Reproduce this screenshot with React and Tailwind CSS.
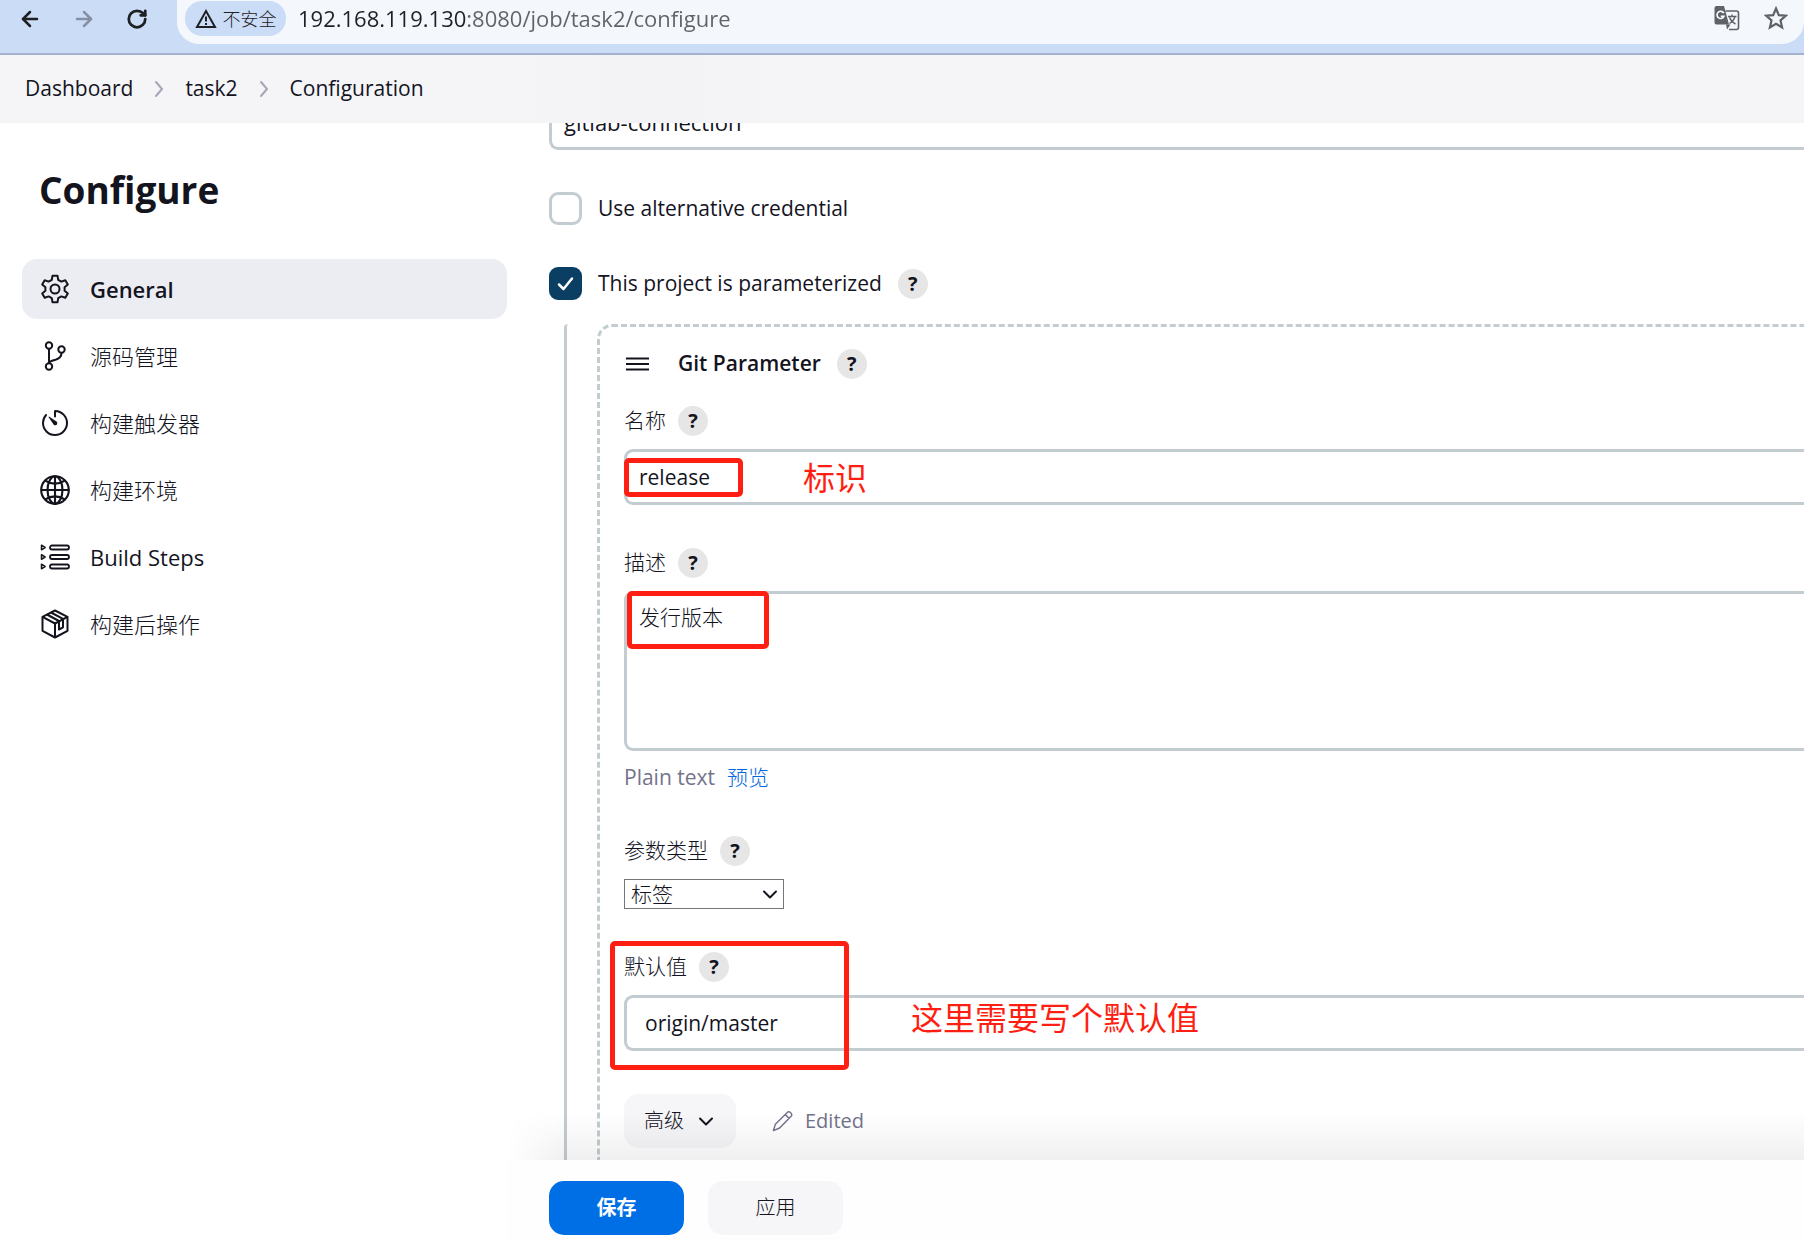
import React from 'react';
import clsx from 'clsx';
import { LuArrowLeft, LuArrowRight, LuRotateCw } from 'react-icons/lu';
import { IoTimerOutline, IoGlobeOutline } from 'react-icons/io5';

function GearIcon({ className }) {
  return (
    <svg viewBox="0 0 30 30" fill="none" stroke="currentColor" strokeWidth="2" strokeLinejoin="round" className={className}>
      <path d="M11.8 5.800L12.500 1.700H17.500L18.200 5.800L21.400 7.600L25.300 6.200L27.800 10.500L24.600 13.200V16.800L27.800 19.500L25.300 23.800L21.400 22.400L18.200 24.200L17.500 28.300H12.500L11.800 24.200L8.600 22.400L4.700 23.800L2.200 19.500L5.400 16.800V13.200L2.200 10.500L4.700 6.200L8.600 7.600z" />
      <circle cx="15" cy="15" r="4.500" />
    </svg>
  );
}

function BranchIcon({ className }) {
  return (
    <svg viewBox="0 0 30 30" fill="none" stroke="currentColor" strokeWidth="2" className={className}>
      <circle cx="9" cy="4.500" r="3.200" />
      <circle cx="21.500" cy="8.500" r="3.200" />
      <circle cx="9" cy="25.500" r="3.200" />
      <path d="M9 7.700v14.600M21.500 11.700c0 4.500-2.500 6-6 7-3.500.8-6 1.600-6.500 3.600" />
    </svg>
  );
}

function StepsIcon({ className }) {
  return (
    <svg viewBox="0 0 30 30" fill="none" stroke="currentColor" strokeWidth="1.800" strokeLinejoin="round" className={className}>
      <rect x="10" y="3.500" width="19" height="4" rx="2" />
      <rect x="10" y="13" width="19" height="4" rx="2" />
      <rect x="10" y="22.500" width="19" height="4" rx="2" />
      <path d="M1.500 3.200v4.600l3.600-2.300zM1.500 12.700v4.600l3.600-2.300zM1.500 22.200v4.600l3.600-2.300z" strokeWidth="1.500" />
    </svg>
  );
}

function PackageIcon({ className }) {
  return (
    <svg viewBox="0 0 30 30" fill="none" stroke="currentColor" strokeWidth="2" strokeLinejoin="round" className={className}>
      <path d="M15 1.500l12.500 6.300v14L15 28.500 2.500 21.800v-14z" />
      <path d="M2.500 7.800L15 14.500l12.500-6.700M15 14.500v14" />
      <path d="M7 5.500l12 6.500v8.500l4-2.200V9.800L11 3.500" />
    </svg>
  );
}

function TranslateIcon({ className }) {
  return (
    <svg viewBox="0 0 26 26" fill="none" className={className}>
      <path d="M11.500 6H22.500a2 2 0 0 1 2 2v14.500a2 2 0 0 1-2 2H15" stroke="#5f6368" strokeWidth="1.600" />
      <path d="M2.500 1h7.500l5 18.500H2.500a2 2 0 0 1-2-2V3a2 2 0 0 1 2-2z" fill="#5f6368" />
      <path d="M12 19.500h4.500L13 24.500z" fill="#5f6368" />
      <path d="M9.800 8.200A3.600 3.600 0 1 0 10 11.200H6.800" stroke="#fff" strokeWidth="1.600" />
      <path d="M14 11.500h8.500M18 9.500v2M21 11.500c-.8 3-3 5.500-5.500 7M15.500 12.500c1 2.500 3 5 6 6.500" stroke="#5f6368" strokeWidth="1.400" />
    </svg>
  );
}

function PencilIcon({ className }) {
  return (
    <svg viewBox="0 0 22 22" fill="none" stroke="currentColor" strokeWidth="1.500" strokeLinejoin="round" className={className}>
      <path d="M1.500 20.500l2-6.500L15.500 2a2.600 2.600 0 0 1 4.300 3.800L8 17.800zM14 3.800l4 4" />
    </svg>
  );
}

function Chevron({ className, d = 'M4 7.500l6 6 6-6' }) {
  return (
    <svg viewBox="0 0 20 20" fill="none" stroke="currentColor" strokeWidth="2" strokeLinecap="round" strokeLinejoin="round" className={className}>
      <path d={d} />
    </svg>
  );
}

const NAV_ITEMS = [
  { label: 'General', icon: GearIcon, size: 'size-[30px]', weight: 'font-semibold', active: true },
  { label: '源码管理', icon: BranchIcon, size: 'size-[30px]', weight: 'font-light' },
  { label: '构建触发器', icon: IoTimerOutline, size: 'size-8', weight: 'font-light' },
  { label: '构建环境', icon: IoGlobeOutline, size: 'size-[34px]', weight: 'font-light' },
  { label: 'Build Steps', icon: StepsIcon, size: 'size-[30px]', weight: 'font-normal' },
  { label: '构建后操作', icon: PackageIcon, size: 'size-[30px]', weight: 'font-light' },
];

const inputClass =
  'block w-full h-14 rounded-l-[9px] border-[3px] border-r-0 border-[#c3ccd1] bg-white outline-none';

function HelpButton() {
  return (
    <button
      type="button"
      aria-label="Help"
      className="flex size-[30px] shrink-0 items-center justify-center rounded-full bg-[#e6e6e6] text-xl leading-none font-bold"
    >
      ?
    </button>
  );
}

function Field({ id, label, help, children }) {
  return (
    <div className="mb-[43px]">
      <div className="mb-[13px] flex h-[30px] items-center gap-3">
        <label htmlFor={id} className="font-light">{label}</label>
        <HelpButton />
      </div>
      <div className="relative">{children}</div>
      {help}
    </div>
  );
}

// Red frames and notes drawn over the form
function Mark({ className }) {
  return <div className={clsx('pointer-events-none absolute rounded-[5px] border-[5px] border-[#ff1f12]', className)} />;
}

function Note({ className, children }) {
  return (
    <span className={clsx('pointer-events-none absolute whitespace-nowrap text-[32px] leading-10 text-[#ff1f12]', className)}>
      {children}
    </span>
  );
}

function BrowserBar() {
  return (
    <div className="flex h-[55px] shrink-0 items-start border-b-2 border-[#a3b3cf] bg-[#cbdcf7]">
      <div className="flex h-[37px] w-[177px] shrink-0 items-center gap-[30px] pl-[18px] text-[#1f2023]">
        <button type="button" aria-label="Back"><LuArrowLeft className="size-6" strokeWidth={2.5} /></button>
        <button type="button" aria-label="Forward" className="text-[#8690a3]"><LuArrowRight className="size-6" strokeWidth={2.5} /></button>
        <button type="button" aria-label="Reload"><LuRotateCw className="size-[22px]" strokeWidth={3} /></button>
      </div>
      <div className="flex h-11 flex-1 items-start rounded-b-[22px] bg-[#f4f7fc] pr-4 pl-2">
        <button type="button" className="mt-px flex h-[35px] w-[101px] items-center justify-center gap-[6px] rounded-[17px] bg-[#cbdcf7] text-lg text-[#1f2023]">
          <svg viewBox="0 0 22 20" fill="none" stroke="currentColor" strokeWidth="2" className="h-5 w-[22px]">
            <path d="M11 2L20 18H2zM11 7.500v5M11 14v2" />
          </svg>
          <span className="font-light">不安全</span>
        </button>
        {/* host part dark, port and path grey */}
        <input
          aria-label="Address"
          readOnly
          value="192.168.119.130:8080/job/task2/configure"
          className="ml-3 h-9 min-w-0 flex-1 bg-[linear-gradient(to_right,#1f2023_168px,#5f6368_168px)] bg-clip-text text-[22px] text-transparent outline-none"
        />
        <div className="flex h-9 items-center gap-6">
          <button type="button" aria-label="Translate"><TranslateIcon className="size-[26px]" /></button>
          <button type="button" aria-label="Bookmark">
            <svg viewBox="0 0 24 24" fill="none" stroke="#5f6368" strokeWidth="2.200" className="size-6">
              <path d="M12 2.500l2.800 6.600 7.100.6-5.400 4.700 1.600 7-6.100-3.700-6.100 3.700 1.600-7-5.400-4.700 7.100-.6z" />
            </svg>
          </button>
        </div>
      </div>
    </div>
  );
}

function Breadcrumbs() {
  return (
    <nav className="flex h-[68px] shrink-0 items-center gap-4 bg-[#f5f5f8] bg-linear-to-r from-transparent from-28% via-black/1 via-36% to-transparent to-44% pl-[25px]">
      <a href="#dashboard">Dashboard</a>
      <Chevron className="size-5 text-[#a6a6b8]" d="M7 3l6 7-6 7" />
      <a href="#task2">task2</a>
      <Chevron className="size-5 text-[#a6a6b8]" d="M7 3l6 7-6 7" />
      <a href="#configure">Configuration</a>
    </nav>
  );
}

function Sidebar() {
  return (
    <aside className="w-[507px] shrink-0 pl-[22px]">
      <h1 className="mt-10 mb-[42px] pl-[17px] text-[37px] leading-[54px] font-bold">Configure</h1>
      <nav className="flex flex-col gap-[7px]">
        {NAV_ITEMS.map(({ label, icon: Icon, size, weight, active }) => (
          <a
            key={label}
            href="#section"
            className={clsx(
              'flex h-[60px] items-center gap-5 rounded-[15px] pl-[18px] text-[22px]',
              weight,
              active && 'bg-[#ecedf3]'
            )}
          >
            <span className="flex size-[30px] items-center justify-center">
              <Icon className={clsx('shrink-0', size)} />
            </span>
            {label}
          </a>
        ))}
      </nav>
    </aside>
  );
}

function Checkbox({ id, checked, label, children }) {
  return (
    <div className="flex h-[33px] items-center">
      <div className="relative size-[33px] shrink-0">
        <input
          id={id}
          type="checkbox"
          defaultChecked={checked}
          className="peer block size-[33px] appearance-none rounded-[9px] border-[3px] border-[#c3ccd1] checked:border-[#0a3f63] checked:bg-[#0a3f63]"
        />
        <svg viewBox="0 0 33 33" fill="none" stroke="white" strokeWidth="2.500" strokeLinecap="round" strokeLinejoin="round" className="pointer-events-none absolute inset-0 hidden peer-checked:block">
          <path d="M10 17.500l4.500 4.500L23 11.500" />
        </svg>
      </div>
      <label htmlFor={id} className="mr-4 ml-4">{label}</label>
      {children}
    </div>
  );
}

function GitParameter() {
  return (
    <section className="ml-[30px] flex-1 rounded-tl-[15px] border-t-[3px] border-l-[3px] border-dashed border-[#c3ccd1] pt-[22px] pl-6">
      <div className="mb-[27px] flex h-[30px] items-center">
        <svg viewBox="0 0 24 16" stroke="currentColor" strokeWidth="2" className="mr-7 ml-[2px] h-4 w-6">
          <path d="M0 2.500h23M0 8h23M0 13.500h23" />
        </svg>
        <h2 className="mr-4 font-semibold">Git Parameter</h2>
        <HelpButton />
      </div>

      <Field id="name" label="名称">
        <input id="name" defaultValue="release" className={clsx(inputClass, 'pl-3')} />
        <Mark className="top-[9px] left-0 h-[39px] w-[119px]" />
        <Note className="top-[9px] left-[179px]">标识</Note>
      </Field>

      <Field
        id="description"
        label="描述"
        help={
          <div className="mt-3 flex h-[30px] items-center gap-3 text-[#73738c]">
            <span>Plain text</span>
            <a href="#preview" className="font-light text-[#0067e0]">预览</a>
          </div>
        }
      >
        <textarea
          id="description"
          defaultValue="发行版本"
          className="block h-40 w-full resize-none rounded-l-[9px] border-[3px] border-r-0 border-[#c3ccd1] py-2 pl-3 font-light outline-none"
        />
        <Mark className="top-0 left-[3px] h-[58px] w-[142px]" />
      </Field>

      <Field id="type" label="参数类型">
        <select id="type" className="block h-[30px] w-40 appearance-none border border-[#767676] bg-white pl-[6px] leading-7 font-light">
          <option>标签</option>
        </select>
        <Chevron className="pointer-events-none absolute top-[5px] left-[136px] size-5" />
      </Field>

      <Field id="default" label="默认值">
        <input id="default" defaultValue="origin/master" className={clsx(inputClass, 'pl-[18px]')} />
        <Mark className="-top-[54px] -left-[14px] h-[129px] w-[239px]" />
        <Note className="top-[3px] left-[287px]">这里需要写个默认值</Note>
      </Field>

      <div className="flex items-center">
        <button type="button" className="flex h-[54px] w-28 items-center justify-center gap-3 rounded-[15px] bg-[#f6f6f9] text-xl">
          <span className="font-light">高级</span>
          <Chevron className="size-5" />
        </button>
        <div className="ml-9 flex items-center gap-3 text-xl text-[#73738c]">
          <PencilIcon className="size-[21px]" />
          Edited
        </div>
      </div>
    </section>
  );
}

function ActionBar() {
  return (
    <footer className="relative flex shrink-0 gap-6 bg-[#fefefe] pt-[21px] pb-[7px] pl-[42px] text-xl">
      <div className="pointer-events-none absolute inset-x-0 bottom-full h-12 bg-linear-to-t from-black/6 to-transparent mask-l-from-[1240px] mask-l-to-100%" />
      <button type="button" className="h-[54px] w-[135px] rounded-[15px] bg-[#006fe6] font-bold text-white">保存</button>
      <button type="button" className="h-[54px] w-[135px] rounded-[15px] bg-[#f6f6f9] font-light">应用</button>
    </footer>
  );
}

export default function App() {
  return (
    <div className="flex h-screen flex-col overflow-hidden bg-white font-['Open_Sans','Noto_Sans_CJK_SC',sans-serif] text-[21px] text-[#14141f]">
      <BrowserBar />
      <Breadcrumbs />
      <div className="flex min-h-0 flex-1">
        <Sidebar />
        <div className="flex min-w-0 flex-1 flex-col">
          <main className="flex min-h-0 flex-1 flex-col overflow-hidden pl-[42px]">
            <select aria-label="GitLab Connection" className={clsx(inputClass, '-mt-[29px] mb-[42px] shrink-0 appearance-none pl-3 text-[22px]')}>
              <option>gitlab-connection</option>
            </select>
            <div className="flex shrink-0 flex-col gap-[42px]">
              <Checkbox id="alternative" label="Use alternative credential" />
              <Checkbox id="parameterized" label="This project is parameterized" checked>
                <HelpButton />
              </Checkbox>
            </div>
            <div className="mt-6 ml-[15px] flex flex-1 rounded-tl-sm border-l-[3px] border-[#c3ccd1]">
              <GitParameter />
            </div>
          </main>
          <ActionBar />
        </div>
      </div>
    </div>
  );
}
